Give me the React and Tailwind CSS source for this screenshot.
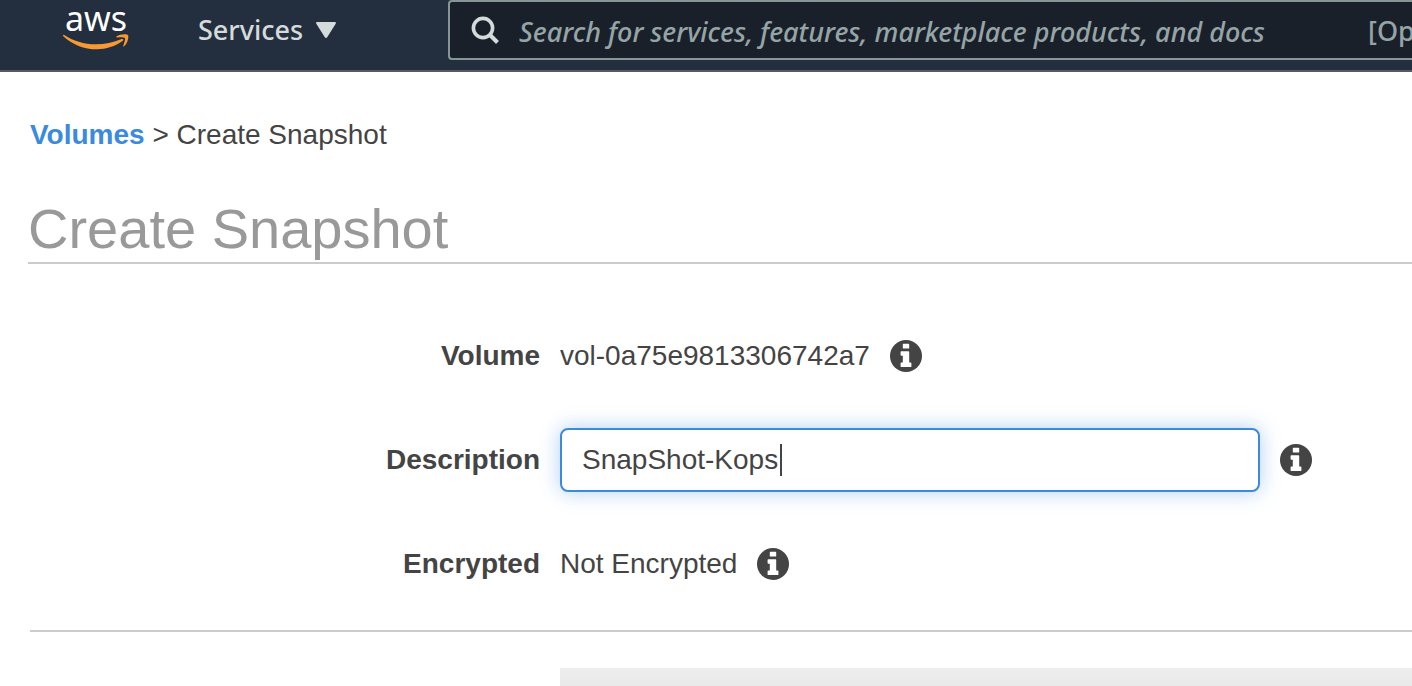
import { useState } from "react";

function AwsLogo() {
  return (
    <a href="#home" aria-label="AWS home" className="flex w-[66px] shrink-0 flex-col items-center">
      <span className="h-[34px] font-['Noto_Sans',sans-serif] text-[34px] leading-[36px] text-white">aws</span>
      <svg viewBox="0 0 66 16" className="h-4 w-[66px]" aria-hidden="true">
        <path fill="#f79a34" d="M1.200 1C10 6.800 21 10.300 33 10.300c8.500 0 17.500-1.800 25.700-5.300 1.300-.5 2.300.9 1.100 1.800C52.300 12.400 43 15.300 34 15.300 21 15.300 9.300 10.500.3 2.200-.4 1.500.3.500 1.200 1z" />
        <path fill="#f79a34" d="M53.600 2.200C56.700 0 63.800-.5 65 1c1 1.500-.3 8.200-3.900 11.300-.6.500-1.200.2-.9-.4.800-2.100 2.500-6.900 1.700-8-.8-1-5.300-.8-7.700-.5-.8.100-1.200-.7-.6-1.200z" />
      </svg>
    </a>
  );
}

function InfoButton({ label }) {
  return (
    <button type="button" aria-label={label} className="size-8 shrink-0">
      <svg viewBox="0 0 32 32" className="size-8" aria-hidden="true">
        <circle cx="16" cy="16" r="16" fill="#444" />
        <path fill="#fff" d="M13.500 3.700h5a.7.7 0 0 1 .7.700v3.500a.7.7 0 0 1-.7.700h-5a.7.7 0 0 1-.7-.7V4.400a.7.7 0 0 1 .7-.7zM11.300 11.200h7.200a.7.7 0 0 1 .7.700v10.500h1.500a.7.7 0 0 1 .7.700v3.300a.7.7 0 0 1-.7.700h-9.400a.7.7 0 0 1-.7-.7v-3.300a.7.7 0 0 1 .7-.7h1.500v-6.600h-1.500a.7.7 0 0 1-.7-.7v-3.200a.7.7 0 0 1 .7-.7z" />
      </svg>
    </button>
  );
}

function Header() {
  return (
    <header className="flex h-[72px] items-start border-b-2 border-[#545b64] bg-[#232f3e] pl-[63px]">
      <AwsLogo />
      <button
        type="button"
        className="ml-[69px] flex h-[60px] w-[138px] shrink-0 items-center justify-between font-['Noto_Sans',sans-serif] text-[27px] font-medium text-[#d5dbdb]"
      >
        Services
        <svg viewBox="0 0 20 16" className="h-4 w-5" fill="#d5dbdb" aria-hidden="true">
          <path d="M1.200 0h17.600c1 0 1.500 1 .9 1.800L11.200 15.200c-.6.900-1.800.9-2.400 0L.3 1.800C-.3 1 .2 0 1.200 0z" />
        </svg>
      </button>
      <div className="ml-28 flex h-[60px] min-w-0 flex-1 items-center rounded-l border-2 border-r-0 border-[#879596] bg-[#1a202a] pl-[21px] font-['Noto_Sans',sans-serif] text-[27px] font-medium text-[#95a5a6]">
        <svg viewBox="0 0 28 28" className="size-7 shrink-0" fill="none" stroke="#d5dbdb" aria-hidden="true">
          <circle cx="12" cy="12" r="9.600" strokeWidth="3.600" />
          <path d="M18.500 18.500l8 8" strokeWidth="4" />
        </svg>
        <input
          type="text"
          aria-label="Search"
          placeholder="Search for services, features, marketplace products, and docs"
          className="ml-5 h-full min-w-0 flex-1 bg-transparent pt-0.5 italic outline-none placeholder:text-[#95a5a6]"
        />
        <span className="w-11 shrink-0 overflow-hidden pt-0.5 whitespace-nowrap">[Option+S]</span>
      </div>
    </header>
  );
}

const labelClass = "w-[510px] shrink-0 text-right font-bold";

function App() {
  const [description, setDescription] = useState("SnapShot-Kops");

  return (
    <div className="w-full overflow-hidden bg-white font-['Liberation_Sans',Arial,sans-serif] text-[28px] leading-8 text-[#444]">
      <Header />
      <main>
        <nav aria-label="Breadcrumb" className="px-[30px] pt-[47px]">
          <a href="#volumes" className="font-bold text-[#3b8ade]">Volumes</a> &gt; Create Snapshot
        </nav>
        <h1 className="ml-7 mt-[46px] border-b-2 border-[#ccc] pb-px text-[56px] leading-[64px] text-[#999]">
          Create Snapshot
        </h1>
        <form className="ml-[30px] flex flex-col gap-10 border-b-2 border-[#ccc] pt-[60px] pb-[34px]" onSubmit={(e) => e.preventDefault()}>
          <div className="flex h-16 items-center gap-5">
            <span className={labelClass}>Volume</span>
            <span>vol-0a75e9813306742a7</span>
            <InfoButton label="About volume" />
          </div>
          <div className="flex h-16 items-center gap-5">
            <label htmlFor="description" className={labelClass}>Description</label>
            <div className="relative w-[700px]">
              <input
                id="description"
                type="text"
                value={description}
                onChange={(e) => setDescription(e.target.value)}
                className="block h-16 w-full rounded-lg border-2 border-[#3b8ade] bg-white px-5 caret-transparent shadow-[0_0_20px_rgba(59,138,222,0.4)] outline-none"
              />
              <span aria-hidden="true" className="absolute top-4 left-[220px] h-8 w-0.5 bg-[#444]" />
            </div>
            <InfoButton label="About description" />
          </div>
          <div className="flex h-16 items-center gap-5">
            <span className={labelClass}>Encrypted</span>
            <span>Not Encrypted</span>
            <InfoButton label="About encryption" />
          </div>
        </form>
        <div className="mt-9 ml-[560px] h-[18px] bg-linear-to-b from-[#eee] to-[#e9e9e9]" />
      </main>
    </div>
  );
}

export default App;
